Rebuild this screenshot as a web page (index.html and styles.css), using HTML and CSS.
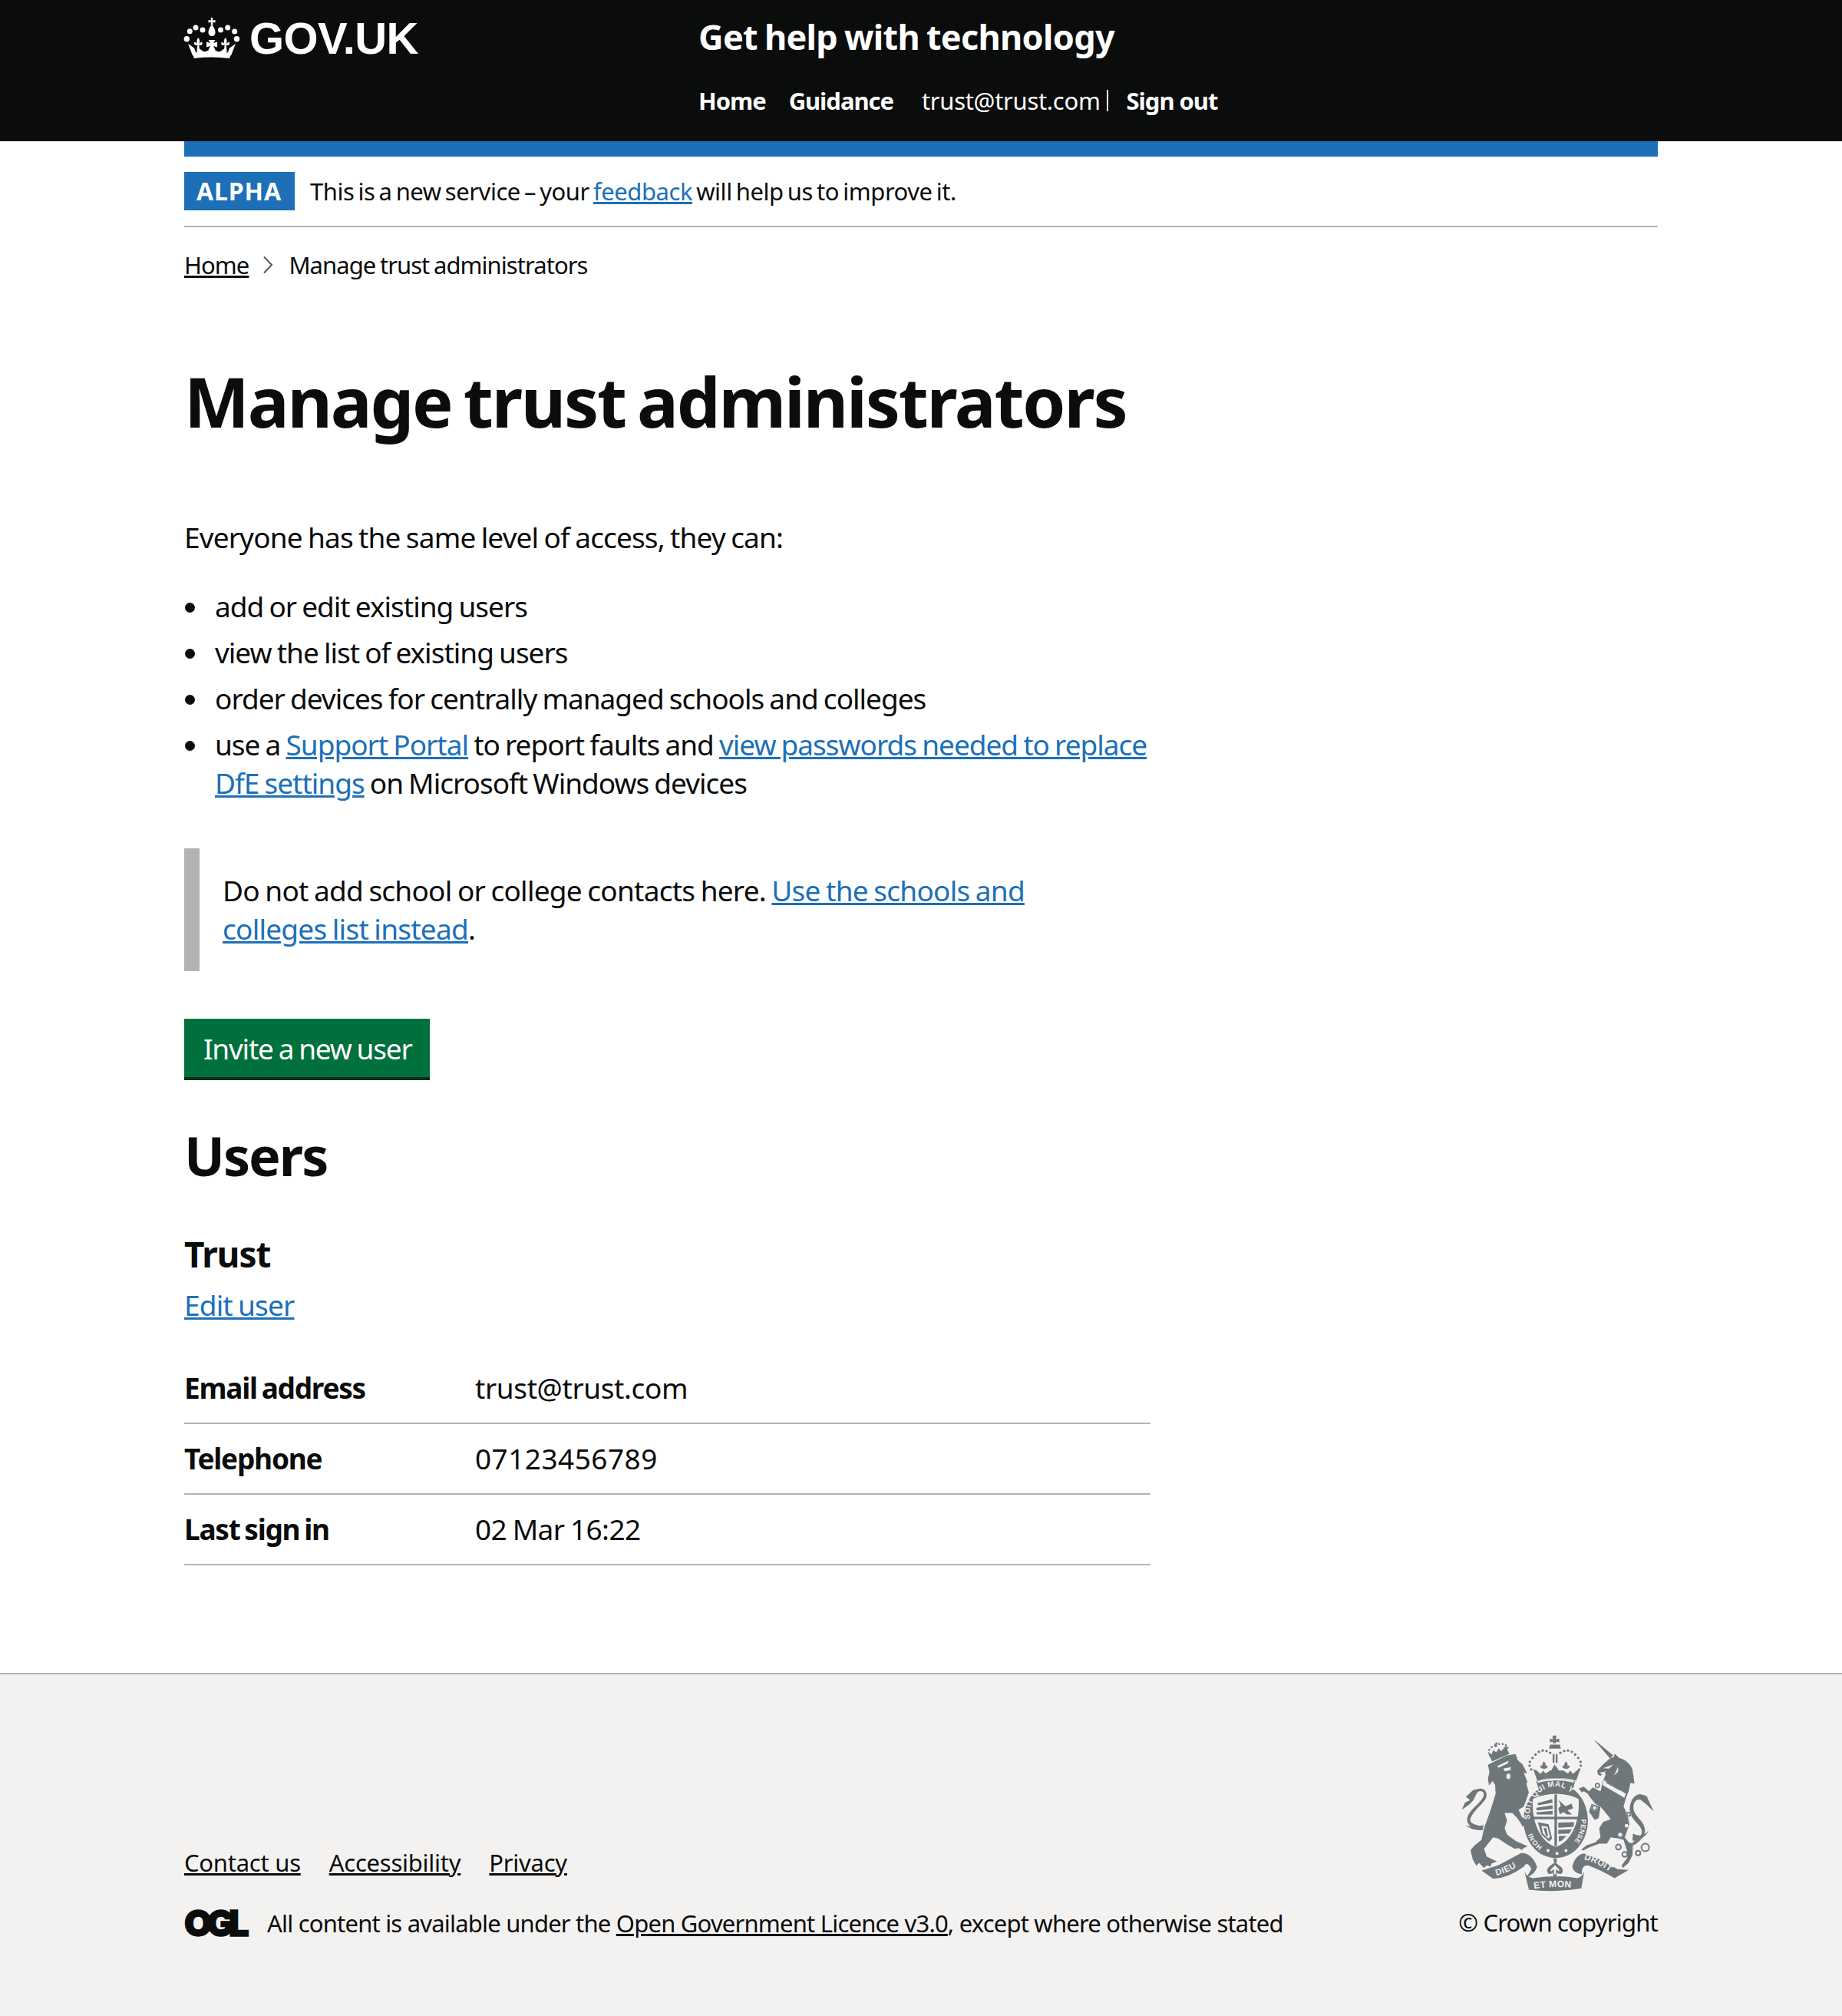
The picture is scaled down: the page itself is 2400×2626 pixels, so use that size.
FILE: index.html
```html
<!DOCTYPE html>
<html lang="en">
<head>
<meta charset="utf-8">
<title>Manage trust administrators</title>
<link rel="stylesheet" href="styles.css">
</head>
<body>
<header class="masthead">
  <div class="wrap masthead-row">
    <a class="logo" href="#">
      <svg class="crown" viewBox="0 0 90 70" aria-hidden="true">
        <g fill="#fff">
          <path d="M39.500 8h3l-.5 3.500 3.500-.5v3.500l-3.500-.5.5 3.500h-3l.5-3.500-3.500.5v-3.500l3.500.5z"/>
          <path d="M41 17c3 4 4.500 7 4.500 10 0 3-2 5-4.500 5s-4.500-2-4.500-5c0-3 1.500-6 4.500-10z"/>
          <circle cx="29" cy="24" r="3.500"/><circle cx="20" cy="21" r="3.500"/><circle cx="12.300" cy="25.700" r="3.500"/><circle cx="8.300" cy="35.700" r="3.700"/>
          <circle cx="52.500" cy="24" r="3.500"/><circle cx="61.700" cy="21" r="3.500"/><circle cx="70.700" cy="26" r="3.500"/><circle cx="73.500" cy="35.700" r="3.700"/>
          <path d="M23.300 34c2 2.500 2.500 5 1.300 8l3-2.500c1.700 1 1.700 4-1 4.500l-2.300-.3 1 9h-4l1-9-2.300.3c-2.700-.5-2.700-3.500-1-4.500l3 2.500c-1.200-3-.7-5.500 1.300-8z"/>
          <path d="M58.700 34c2 2.500 2.500 5 1.300 8l3-2.500c1.700 1 1.700 4-1 4.500l-2.300-.3 1 9h-4l1-9-2.300.3c-2.700-.5-2.700-3.500-1-4.500l3 2.500c-1.200-3-.7-5.500 1.300-8z"/>
          <path d="M36.500 37h9l-2.500 4 5-1.500v7l-5-1.500 2.500 5h-9l2.500-5-5 1.500v-7l5 1.500z"/>
          <path d="M10 42l8 5.500 2.500 7-4.500 3z"/>
          <path d="M72 42l-8 5.500-2.500 7 4.500 3z"/>
          <path d="M23 47l9 6.500-10 2zM59 47l-9 6.500 10 2zM41 48l-11 6h22z"/>
          <path d="M15.500 54q25.500-4 51 0l-2.500 7q-23-3-46 0z"/>
        </g>
      </svg>
      <span class="logo-text">GOV.UK</span>
    </a>
    <div class="service">
      <a class="service-name" href="#">Get help with technology</a>
      <nav class="nav">
        <a class="nav-link" href="#">Home</a>
        <a class="nav-link nav-guidance" href="#">Guidance</a>
        <span class="nav-email">trust@trust.com</span>
        <span class="nav-sep"></span>
        <a class="nav-link" href="#">Sign out</a>
      </nav>
    </div>
  </div>
</header>

<div class="wrap">
  <div class="rule-blue"></div>
  <div class="phase">
    <strong class="tag">ALPHA</strong>
    <span class="phase-text">This is a new service – your <a class="link" href="#">feedback</a> will help us to improve it.</span>
  </div>
  <nav class="crumbs">
    <a class="crumb-link" href="#">Home</a>
    <svg class="crumb-chev" viewBox="0 0 14 24" aria-hidden="true"><path d="M2 1.500l10 10.500-10 10.500" fill="none" stroke="#505a5f" stroke-width="2"/></svg>
    <span>Manage trust administrators</span>
  </nav>

  <main class="main">
    <h1 class="h1">Manage trust administrators</h1>
    <p class="lead">Everyone has the same level of access, they can:</p>
    <ul class="list">
      <li>add or edit existing users</li>
      <li>view the list of existing users</li>
      <li>order devices for centrally managed schools and colleges</li>
      <li>use a <a class="link" href="#">Support Portal</a> to report faults and <a class="link" href="#">view passwords needed to replace DfE settings</a> on Microsoft Windows devices</li>
    </ul>
    <div class="inset">Do not add school or college contacts here. <a class="link" href="#">Use the schools and colleges list instead</a>.</div>
    <a class="button" href="#">Invite a new user</a>
    <h2 class="h2">Users</h2>
    <h3 class="h3">Trust</h3>
    <a class="link edit" href="#">Edit user</a>
    <dl class="summary">
      <div class="row"><dt>Email address</dt><dd class="dd-mail">trust@trust.com</dd></div>
      <div class="row"><dt>Telephone</dt><dd class="dd-num">07123456789</dd></div>
      <div class="row"><dt>Last sign in</dt><dd class="dd-date">02 Mar 16:22</dd></div>
    </dl>
  </main>
</div>

<footer class="footer">
  <div class="wrap footer-row">
    <div class="footer-left">
      <div class="footer-links">
        <a href="#">Contact us</a>
        <a href="#">Accessibility</a>
        <a href="#">Privacy</a>
      </div>
      <div class="licence">
        <span class="ogl">OGL</span>
        <span class="licence-text">All content is available under the <a href="#">Open Government Licence v3.0</a>, except where otherwise stated</span>
      </div>
    </div>
    <div class="footer-right">
      <svg class="crest" viewBox="125 90 765 620" aria-hidden="true">
        <defs>
          <path id="g-top" d="M399 425A100 116 0 0 1 598 400"/>
          <path id="g-right" d="M600 425A100 116 0 0 1 548 532"/>
          <path id="g-left" d="M448 532A100 116 0 0 1 400 445"/>
          <path id="b-left" d="M268 645Q330 628 376 590"/>
          <path id="b-mid" d="M412 697Q495 684 582 694"/>
          <path id="b-right" d="M610 582Q680 598 736 652"/>
        </defs>
        <!-- lion -->
        <g transform="translate(105 75)" fill="#6f777b">
          <path d="M130 137L160 122 205 100 238 95 246 118 265 135 283 170 270 168 285 205 280 210 290 245 270 300 250 312 262 340 290 368 265 378 258 365 245 345 225 325 195 325 205 355 195 385 205 410 240 435 285 455 270 462 262 470 250 462 235 465 200 445 170 425 150 420 115 465 125 495 165 515 145 522 140 535 125 530 115 540 95 520 85 532 70 505 62 470 80 450 105 430 115 385 140 315 160 250 158 215 148 200 134 218 130 190 136 165Z"/>
          <path d="M40 285L60 275 44 262 72 236 98 230C120 228 132 250 120 272 108 292 72 318 62 346 58 360 66 370 112 378L108 388C60 385 44 366 50 342 58 312 98 290 112 262 118 248 110 238 96 240 84 244 82 262 72 276 60 292 42 302 28 312Z"/>
          <path d="M44 374Q80 382 112 372L110 392Q70 396 44 374Z"/>
          <path d="M136 100L204 74 214 94 146 124Z"/>
          <path d="M130 86L145 96 150 80 163 88 172 72 182 84 200 62 206 76 150 100 136 106Z"/>
          <g>
            <circle cx="160" cy="62" r="6"/><circle cx="145" cy="68" r="3.800"/><circle cx="135" cy="78" r="3.800"/><circle cx="174" cy="56" r="3.800"/><circle cx="188" cy="56" r="3.800"/><circle cx="200" cy="60" r="3.800"/><circle cx="207" cy="70" r="3.800"/>
            <path d="M156 52h6v-4h3v4h5v3h-5v3h-3v-3h-6z"/>
          </g>
          <g fill="#f3f2f1">
            <path d="M166 142L212 120 206 132 172 148ZM190 152L220 146 218 158 196 162Z"/>
            <ellipse cx="210" cy="182" rx="8" ry="11"/>
          </g>
        </g>
        <!-- imperial crown -->
        <g fill="#6f777b">
          <path d="M488 98h14v10l-2 4h4l10-2v14l-10-2h-4l2 6h-14l2-6h-4l-9 2v-14l9 2h4l-2-4z"/>
          <path d="M478 133h38l4 16h-46z"/>
          <path d="M488 170h7v34h-7zM500 170h7v34h-7z"/>
          <g>
            <circle cx="421" cy="172" r="5"/><circle cx="434" cy="161" r="5"/><circle cx="449" cy="156" r="5"/><circle cx="464" cy="158" r="5"/><circle cx="478" cy="165" r="5"/><circle cx="409" cy="185" r="5"/><circle cx="399" cy="200" r="5"/><circle cx="398" cy="215" r="5"/><circle cx="404" cy="230" r="5"/>
            <circle cx="518" cy="165" r="5"/><circle cx="533" cy="158" r="5"/><circle cx="548" cy="156" r="5"/><circle cx="563" cy="161" r="5"/><circle cx="576" cy="172" r="5"/><circle cx="588" cy="185" r="5"/><circle cx="597" cy="200" r="5"/><circle cx="598" cy="215" r="5"/><circle cx="592" cy="230" r="5"/>
          </g>
          <path d="M412 228l16 8 12 12 12-14 8 12 18-12 18 0 8-14 8 14 18 0 18 12 8-12 12 14 12-12 16-8-16 46c-40-14-112-14-152 0z"/>
          <path d="M454 198c5 6 8 12 6 18l6-2c4 4 2 10-4 12-6 2-8 2-8 2s-2 0-8-2c-6-2-8-8-4-12l6 2c-2-6 1-12 6-18zM540 198c5 6 8 12 6 18l6-2c4 4 2 10-4 12-6 2-8 2-8 2s-2 0-8-2c-6-2-8-8-4-12l6 2c-2-6 1-12 6-18z"/>
          <path d="M496 210l14 24-14 8-14-8z"/>
          <path d="M424 276c40-16 114-16 152 0l-8 28c-36-14-104-14-136 0z"/>
          <ellipse cx="500" cy="430" rx="126" ry="146"/>
        </g>
        <path d="M428 276c38-14 108-14 144 0l-3 6c-36-12-102-12-138 0z" fill="#f3f2f1"/>
        <!-- shield -->
        <path d="M411 345c52-26 126-26 178 0 8 90-30 170-89 188-59-18-97-98-89-188z" fill="#f3f2f1"/>
        <g fill="#6f777b">
          <path d="M495 328h10v202h-10zM412 415h176v10h-176z"/>
          <path d="M428 362l58-16 2 14-56 10zM424 380l64-10v14l-62 6zM424 398l64-6v14h-62z"/>
          <path d="M512 350l26 24 24-10 6 18-22 8 18 16h-20l-14-10-14 10-6-24 10-10z"/>
          <path d="M430 436l42 8 14 56-12 12-30-28z"/>
          <path d="M510 438l62-2-2 18-60 4zM510 466l52-2-8 16-44 2zM512 490h30l-18 18-12 4z"/>
        </g>
        <g fill="#f3f2f1">
          <circle cx="470" cy="547" r="6"/><circle cx="505" cy="558" r="6"/><circle cx="540" cy="547" r="6"/>
          <path d="M444 450l24 4 10 40-8 6-20-20z"/>
        </g>
        <path d="M452 458l12 2 6 30-8 0z" fill="#6f777b"/>
        <!-- unicorn -->
        <g transform="translate(480 75)" fill="#6f777b">
          <path d="M168 37L245 100 232 112Z"/>
          <path d="M182 160L205 135 232 112 248 105 250 93 268 110C292 116 312 135 320 155L328 210 312 208 305 240 295 265 285 300 300 330 308 370 290 420 305 440 322 445 320 490 305 520 282 540 278 530 300 500 298 470 285 430 265 425 235 420 220 445 190 445 150 460 128 472 120 468 140 452 175 440 195 420 190 385 205 360 235 350 220 330 195 300 175 290 155 265 145 250 130 240 122 245 110 230 130 222 150 240 165 225 195 240 205 200 215 175 210 165 195 180 185 175Z"/>
          <path d="M160 290L195 300 188 345 172 352 150 320Z"/>
          <path d="M318 442C365 415 365 395 340 368 312 340 304 318 312 290 320 258 345 248 352 252L375 258 403 320 375 292 352 274C338 268 326 280 324 298 322 318 332 332 352 354 380 388 374 420 324 452Z"/>
          <path d="M322 405Q350 425 385 395 352 442 320 432Z"/>
          <g fill="none" stroke="#6f777b" stroke-width="6">
            <circle cx="265" cy="458" r="10"/><circle cx="290" cy="487" r="10"/><circle cx="342" cy="482" r="9"/><circle cx="370" cy="460" r="15"/>
          </g>
          <g fill="#f3f2f1">
            <circle cx="183" cy="218" r="11"/><circle cx="172" cy="305" r="12"/><circle cx="305" cy="330" r="10"/>
            <circle cx="297" cy="375" r="7"/><circle cx="272" cy="410" r="8"/><circle cx="318" cy="395" r="3"/>
            <path d="M205 150L245 136 228 152ZM190 168L216 162 206 176ZM262 145Q272 165 246 178 260 160 262 145Z"/>
            <path d="M207 196L294 250 288 266 204 216Z"/>
          </g>
          <g fill="none" stroke="#6f777b" stroke-width="5">
            <circle cx="183" cy="218" r="8"/><circle cx="172" cy="305" r="9"/><circle cx="305" cy="330" r="7"/>
          </g>
          <path d="M214 206l6 0 0-4 5 3 0 4 6 0 0-2 5 3 0 4 6 2 0-3 5 3 0 4 6 2 0-3 5 3 0 4 6 2 0-3 5 3 0 4 6 2-3 4-66-36z" fill="#6f777b"/>
        </g>
        <!-- ribbon -->
        <g fill="#6f777b">
          <path d="M210 625L275 605 365 557Q405 555 427 610 420 640 385 653L405 620Q390 585 375 610 315 655 255 657Z"/>
          <path d="M610 558L680 585 742 620 785 623 730 655Q670 620 625 605 600 605 602 640 568 635 565 610 575 565 610 558Z"/>
          <path d="M378 628Q385 650 410 655 495 640 585 655 605 650 612 628L600 695Q495 712 395 700Z"/>
          <path d="M490 578h14v14l-7 10zM497 592c14 14 34 20 30 38-4 12-18 10-22 2 0 8-2 18-8 24-6-6-8-16-8-24-4 8-18 10-22-2-4-18 16-24 30-38z"/>
        </g>
        <path d="M497 604c6 8 18 14 17 24-4 2-8-6-12-8l-2 20h-6l-2-20c-4 2-8 10-12 8-1-10 11-16 17-24z" fill="#f3f2f1"/>
        <g class="crest-text">
          <text class="crest-garter"><textPath href="#g-top">SOIT QUI MAL Y</textPath></text>
          <text class="crest-small"><textPath href="#g-right">PENSE</textPath></text>
          <text class="crest-small"><textPath href="#g-left">HONI</textPath></text>
          <text class="crest-ribbon"><textPath href="#b-left">DIEU</textPath></text>
          <text class="crest-mid"><textPath href="#b-mid" startOffset="2%">ET MON</textPath></text>
          <text class="crest-ribbon"><textPath href="#b-right">DROIT</textPath></text>
        </g>
      </svg>
      <div class="copyright">© Crown copyright</div>
    </div>
  </div>
</footer>
</body>
</html>
```

FILE: styles.css
```css
* { box-sizing: border-box; }
html, body { margin: 0; padding: 0; }
body {
  font-family: "Noto Sans", "Open Sans", sans-serif;
  color: #0b0c0c;
  font-size: 37px;
  line-height: 50px;
  letter-spacing: -0.85px;
  word-spacing: -1.5px;
  background: #fff;
}
a { color: inherit; }
.wrap { width: 1920px; margin: 0 auto; }

.masthead { background: #0b0c0c; color: #fff; height: 184px; }
.masthead-row { display: flex; }
.logo { display: flex; align-items: flex-start; width: 670px; text-decoration: none; padding-top: 22px; }
.crown { width: 90px; height: 70px; margin: -7px -3px 0 -5px; flex: none; }
.logo-text {
  font-family: "Liberation Sans", Arial, sans-serif;
  font-weight: 700;
  font-size: 58px;
  line-height: 60px;
  letter-spacing: -0.6px;
  margin: -2px 0 0 3px;
}
.service { display: flex; flex-direction: column; }
.service-name { font-size: 45px; line-height: 60px; font-weight: 700; text-decoration: none; padding-top: 18px; letter-spacing: -0.7px; word-spacing: -2px; }
.nav { display: flex; align-items: center; font-size: 31px; line-height: 40px; margin-top: 33px; letter-spacing: -0.3px; word-spacing: 0; }
.nav-link { font-weight: 700; text-decoration: none; letter-spacing: -1.05px; }
.nav-guidance { margin-left: 30px; }
.nav-email { margin-left: 37px; }
.nav-sep { width: 2px; height: 28px; background: #fff; margin: 0 24px 0 8px; }

.rule-blue { height: 20px; background: #1d70b8; }
.phase { display: flex; align-items: center; height: 92px; border-bottom: 2px solid #b1b4b6; }
.tag { background: #1d70b8; color: #fff; font-size: 32px; line-height: 50px; padding: 0 16px; letter-spacing: 0.9px; height: 50px; width: 144px; }
.phase-text { font-size: 31px; margin-left: 20px; letter-spacing: -0.45px; word-spacing: -2.5px; }
.link { color: #1d70b8; }

.crumbs { display: flex; align-items: center; font-size: 31px; line-height: 40px; margin-top: 29px; letter-spacing: -0.95px; word-spacing: -1.5px; }
.crumb-link { color: #0b0c0c; }
.crumb-chev { width: 14px; height: 24px; margin: 0 20px 0 18px; flex: none; }

.main { width: 1259px; padding-top: 107px; }
.h1 { font-size: 90px; line-height: 100px; font-weight: 700; margin: 0 0 103px; letter-spacing: -2.2px; word-spacing: -6px; width: 1400px; }
.lead { margin: 0 0 40px; }
.list { list-style: none; margin: 0 0 60px; padding: 0 0 0 40px; letter-spacing: -1px; }
.list li { margin-bottom: 10px; position: relative; }
.list li::before { content: ""; position: absolute; left: -39px; top: 20px; width: 13px; height: 13px; border-radius: 50%; background: #0b0c0c; }
.inset { width: 1259px; border-left: 20px solid #b1b4b6; padding: 30px 100px 30px 30px; margin-bottom: 62px; letter-spacing: -0.75px; }
.button { display: inline-block; background: #00703c; color: #fff; text-decoration: none; padding: 14px 25px 12px; box-shadow: 0 4px 0 #002d18; height: 76px; width: 320px; margin-bottom: 62px; letter-spacing: -1.2px; white-space: nowrap; }
.h2 { font-size: 70px; line-height: 80px; font-weight: 700; margin: 0 0 58px; letter-spacing: -2px; }
.h3 { font-size: 46px; line-height: 60px; font-weight: 700; margin: 0 0 12px; letter-spacing: -1.1px; }
.edit { display: block; width: max-content; }
.summary { margin: 38px 0 0; }
.row { display: flex; border-bottom: 2px solid #b1b4b6; padding: 20px 0; }
.row dt { width: 379px; font-weight: 700; letter-spacing: -1.25px; word-spacing: -2.5px; }
.row dd { margin: 0; }
.row .dd-mail { letter-spacing: -0.4px; }
.row .dd-num { letter-spacing: 0.45px; }
.row .dd-date { letter-spacing: -0.6px; }

.footer { margin-top: 140px; background: #f3f2f1; border-top: 2px solid #b1b4b6; height: 447px; }
.footer-row { display: flex; justify-content: space-between; font-size: 31px; line-height: 40px; letter-spacing: -0.25px; word-spacing: 0; }
.footer-left { padding-top: 225px; }
.footer-links { display: flex; gap: 37px; }
.licence { display: flex; align-items: center; gap: 26px; margin-top: 39px; }
.licence-text { letter-spacing: -0.8px; }
.ogl { font-family: Inter, "Liberation Sans", sans-serif; font-weight: 900; font-size: 47px; line-height: 40px; letter-spacing: -7px; width: 82px; -webkit-text-stroke: 1.5px #0b0c0c; }
.footer-right { display: flex; flex-direction: column; align-items: flex-end; padding-top: 77px; letter-spacing: -0.8px; }
.crest { width: 255px; height: 207px; display: block; margin-right: 3px; }
.crest-text text { fill: #f3f2f1; font-family: "Liberation Sans", Arial, sans-serif; font-weight: 700; word-spacing: 0; }
.crest-garter { font-size: 30px; letter-spacing: 1.5px; }
.crest-small { font-size: 26px; letter-spacing: 1px; }
.crest-ribbon { font-size: 34px; letter-spacing: 1.5px; }
.crest-mid { font-size: 36px; letter-spacing: 1px; }
.copyright { margin-top: 19px; }
```
